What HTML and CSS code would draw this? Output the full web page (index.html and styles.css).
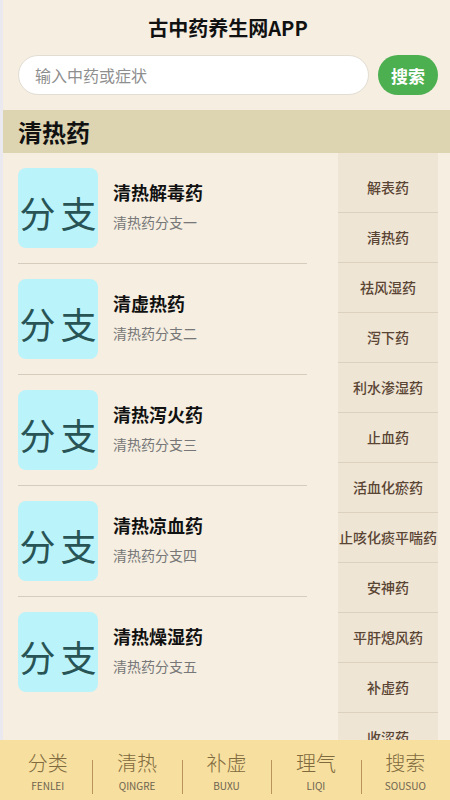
FILE: index.html
```html
<!DOCTYPE html>
<html lang="zh-CN">
<head>
  <meta charset="UTF-8">
  <meta name="viewport" content="width=device-width, initial-scale=1.0">
  <title>古中药养生网APP</title>
  <link rel="stylesheet" href="styles.css">
</head>
<body>

  <header class="top">
    <h1 class="app-title">古中药养生网APP</h1>
    <form class="search" onsubmit="return false">
      <input type="text" class="search-input" placeholder="输入中药或症状">
      <button type="submit" class="search-btn">搜索</button>
    </form>
  </header>

  <div class="band">清热药</div>

  <main class="content">
    <ul class="branch-list">
      <li class="branch">
        <div class="branch-icon">分 支</div>
        <div class="branch-text">
          <h3>清热解毒药</h3>
          <p>清热药分支一</p>
        </div>
      </li>
      <li class="branch">
        <div class="branch-icon">分 支</div>
        <div class="branch-text">
          <h3>清虚热药</h3>
          <p>清热药分支二</p>
        </div>
      </li>
      <li class="branch">
        <div class="branch-icon">分 支</div>
        <div class="branch-text">
          <h3>清热泻火药</h3>
          <p>清热药分支三</p>
        </div>
      </li>
      <li class="branch">
        <div class="branch-icon">分 支</div>
        <div class="branch-text">
          <h3>清热凉血药</h3>
          <p>清热药分支四</p>
        </div>
      </li>
      <li class="branch">
        <div class="branch-icon">分 支</div>
        <div class="branch-text">
          <h3>清热燥湿药</h3>
          <p>清热药分支五</p>
        </div>
      </li>
    </ul>

    <ul class="side-menu">
      <li>解表药</li>
      <li>清热药</li>
      <li>祛风湿药</li>
      <li>泻下药</li>
      <li>利水渗湿药</li>
      <li>止血药</li>
      <li>活血化瘀药</li>
      <li>止咳化痰平喘药</li>
      <li>安神药</li>
      <li>平肝熄风药</li>
      <li>补虚药</li>
      <li>收涩药</li>
    </ul>
  </main>

  <nav class="tabbar">
    <a href="#" class="tab"><span class="tab-cn">分类</span><span class="tab-en">FENLEI</span></a>
    <a href="#" class="tab"><span class="tab-cn">清热</span><span class="tab-en">QINGRE</span></a>
    <a href="#" class="tab"><span class="tab-cn">补虚</span><span class="tab-en">BUXU</span></a>
    <a href="#" class="tab"><span class="tab-cn">理气</span><span class="tab-en">LIQI</span></a>
    <a href="#" class="tab"><span class="tab-cn">搜索</span><span class="tab-en">SOUSUO</span></a>
  </nav>

</body>
</html>
```

FILE: styles.css
```css
/* reset */
* {
  margin: 0;
  padding: 0;
  box-sizing: border-box;
}

body {
  font-family: "Noto Sans CJK SC", "Noto Sans", sans-serif;
  background: #f5eee1;
  border-left: 3px solid #ebe9f0;
  color: #222;
  min-height: 100vh;
}

ul {
  list-style: none;
}

/* header */
.top {
  padding: 14px 12px 0 15px;
}

.app-title {
  font-size: 20px;
  line-height: 28px;
  font-weight: bold;
  text-align: center;
  color: #111;
}

.search {
  display: flex;
  gap: 9px;
  margin-top: 13px;
}

.search-input {
  flex: 1;
  height: 40px;
  border: 1px solid #e2ddd3;
  border-radius: 20px;
  background: #fff;
  padding-left: 16px;
  font-family: inherit;
  font-size: 16px;
  color: #333;
  outline: none;
}

.search-input::placeholder {
  color: #8e8e8e;
}

.search-btn {
  width: 60px;
  height: 40px;
  border: none;
  border-radius: 20px;
  background: #4caf50;
  color: #fff;
  font-family: inherit;
  font-size: 17px;
  font-weight: bold;
}

/* section band */
.band {
  margin-top: 15px;
  height: 43px;
  background: #ddd4b2;
  padding-left: 15px;
  font-size: 24px;
  font-weight: bold;
  line-height: 43px;
  color: #111;
}

/* content */
.content {
  display: flex;
  padding: 0 12px 60px 15px;
}

.branch-list {
  width: 289px;
  padding-top: 15px;
}

.branch {
  display: flex;
  align-items: center;
  gap: 15px;
  padding: 0 0 15px;
  margin-bottom: 15px;
  border-bottom: 1px solid #d5ccbd;
}

.branch:last-child {
  border-bottom: none;
}

.branch-icon {
  width: 80px;
  height: 80px;
  flex-shrink: 0;
  border-radius: 8px;
  background: #baf3fa;
  color: #285455;
  font-size: 36px;
  font-weight: 400;
  line-height: 80px;
  text-align: center;
  word-spacing: -3px;
  padding-top: 4px;
  white-space: nowrap;
  overflow: hidden;
}

.branch-text h3 {
  font-size: 18px;
  line-height: 24px;
  font-weight: bold;
  color: #111;
  margin-top: -4px;
}

.branch-text p {
  margin-top: 8px;
  font-size: 14px;
  line-height: 20px;
  color: #777;
}

/* side menu */
.side-menu {
  margin-left: auto;
  width: 100px;
  background: #eee5d5;
  padding-top: 10px;
}

.side-menu li {
  height: 50px;
  line-height: 49px;
  border-bottom: 1px solid #dcd1be;
  text-align: center;
  font-size: 14px;
  font-weight: 500;
  color: #5a4433;
  white-space: nowrap;
}

/* bottom tabs */
.tabbar {
  position: fixed;
  left: 0;
  right: 0;
  bottom: 0;
  height: 60px;
  background: #f6df9f;
  display: flex;
  padding: 0 0 0 3px;
}

.tab {
  flex: 1;
  display: flex;
  flex-direction: column;
  align-items: center;
  padding-top: 11px;
  text-decoration: none;
  position: relative;
}

.tab + .tab::before {
  content: "";
  position: absolute;
  left: 0;
  top: 20px;
  height: 34px;
  border-left: 1px solid #b8945c;
}

.tab-cn {
  font-size: 20px;
  line-height: 24px;
  font-weight: 300;
  color: #7f6a3e;
}

.tab-en {
  margin-top: 5px;
  font-size: 10px;
  line-height: 12px;
  color: #6e6450;
}
```
